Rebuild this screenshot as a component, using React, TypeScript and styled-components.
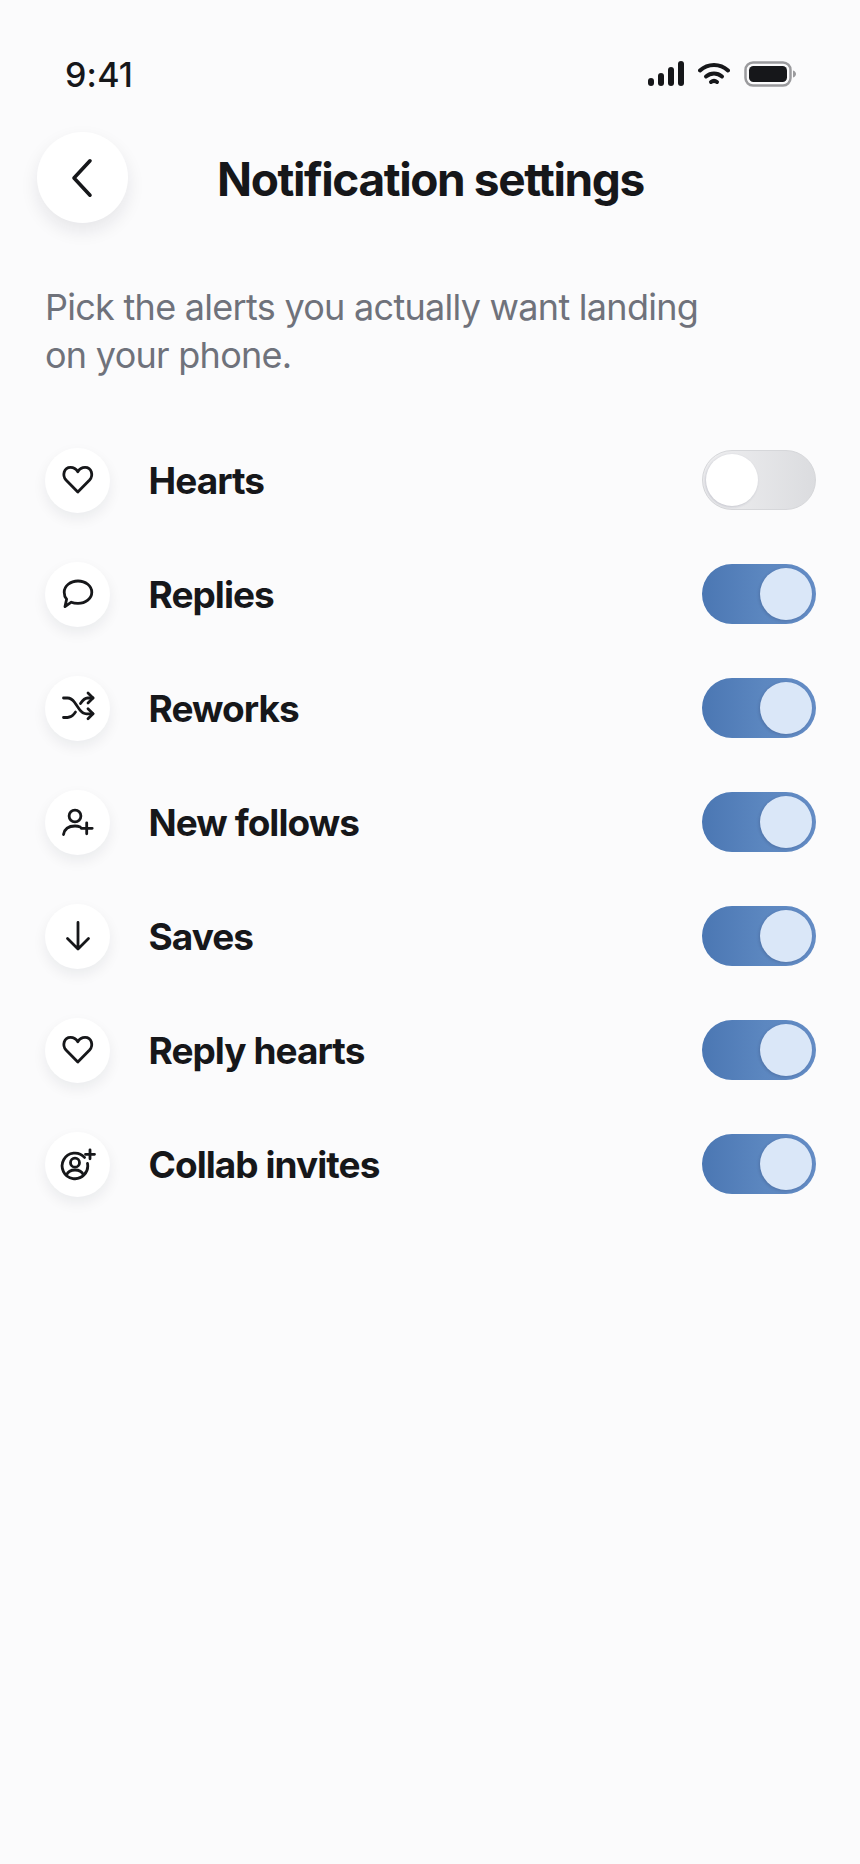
import React from 'react';
import styled, { createGlobalStyle } from 'styled-components';

const Global = createGlobalStyle`
  html, body { margin: 0; background: #fbfbfc; }
  body { font-family: Inter, "Liberation Sans", sans-serif; color: #16171a; }
`;

const Screen = styled.div`
  width: 860px;
  height: 1864px;
  overflow: hidden;
  background: #fbfbfc;
`;

const StatusBar = styled.div`
  display: flex;
  align-items: center;
  justify-content: space-between;
  height: 36px;
  padding: 56px 64px 0 65px;
`;

const Time = styled.span`
  font-size: 34px;
  font-weight: 550;
  letter-spacing: 0.2px;
`;

const StatusIcons = styled.div`
  display: flex;
  align-items: center;
  gap: 14px;
`;

const Header = styled.header`
  display: flex;
  align-items: center;
  padding: 40px 0 0 37px;
`;

const BackButton = styled.button`
  display: flex;
  align-items: center;
  justify-content: center;
  width: 91px;
  height: 91px;
  padding: 0;
  border: 0;
  border-radius: 50%;
  background: #fff;
  color: #16171a;
  box-shadow: 0 8px 18px rgba(20, 24, 40, 0.09);
`;

const Title = styled.h1`
  margin: 2px 0 0 89px;
  font-size: 46px;
  font-weight: 700;
  letter-spacing: -1.4px;
`;

const Intro = styled.p`
  width: 680px;
  margin: 60px 0 0 45px;
  font-size: 36px;
  line-height: 48px;
  letter-spacing: -0.72px;
  color: #6f727b;
`;

const List = styled.div`
  display: flex;
  flex-direction: column;
  gap: 49px;
  margin-top: 69px;
  padding: 0 44px 0 45px;
`;

const Row = styled.div`
  display: flex;
  align-items: center;
  height: 65px;
`;

const IconCircle = styled.div`
  display: flex;
  align-items: center;
  justify-content: center;
  flex: none;
  width: 65px;
  height: 65px;
  border-radius: 50%;
  background: #fff;
  box-shadow: 0 6px 14px rgba(20, 24, 40, 0.07);
`;

const Label = styled.span`
  flex: 1;
  margin-left: 38.5px;
  font-size: 37px;
  font-weight: 700;
  letter-spacing: -0.95px;
`;

const Switch = styled.div<{ $on: boolean }>`
  display: flex;
  flex: none;
  justify-content: ${p => (p.$on ? 'flex-end' : 'flex-start')};
  align-items: center;
  box-sizing: border-box;
  width: 114px;
  height: 60px;
  margin-bottom: 2px;
  padding: ${p => (p.$on ? '0 4px' : '0 2.5px')};
  border-radius: 30px;
  border: ${p => (p.$on ? '0' : '1.5px solid #d6d7da')};
  background: ${p =>
    p.$on
      ? 'linear-gradient(90deg, #4b77b3 0%, #5c87c0 55%, #648cc5 100%)'
      : 'linear-gradient(90deg, #efeff1 0%, #dbdcdf 100%)'};
`;

const Knob = styled.div<{ $on: boolean }>`
  width: 52px;
  height: 52px;
  border-radius: 50%;
  background: ${p => (p.$on ? '#dae7f8' : '#fff')};
  box-shadow: -1px 1px 3px rgba(20, 30, 60, 0.18);
`;

const Chevron = () => (
  <svg width="26" height="40" viewBox="0 0 26 40" fill="none" stroke="currentColor" strokeWidth="3.6" strokeLinecap="round" strokeLinejoin="round">
    <path d="M20 2.800 4 20l16 17.200" />
  </svg>
);

const Signal = () => (
  <svg width="36" height="26" viewBox="0 0 36 26" fill="#16171a">
    <rect x="0" y="17" width="6" height="8" rx="3" />
    <rect x="10" y="12" width="6" height="13" rx="3" />
    <rect x="20" y="6" width="6" height="19" rx="3" />
    <rect x="30" y="0" width="6" height="25" rx="3" />
  </svg>
);

const Wifi = () => (
  <svg width="32" height="24" viewBox="0 0 32 24" fill="none" stroke="#16171a" strokeWidth="4" strokeLinecap="round">
    <path d="M2 8.500C10 1 22 1 30 8.500" />
    <path d="M8 14.500c4.800-4 11.200-4 16 0" />
    <path d="M13 20c1.800-1.400 4.200-1.400 6 0" />
  </svg>
);

const Battery = () => (
  <svg width="52" height="26" viewBox="0 0 52 26">
    <rect x="1.500" y="1.500" width="45" height="23" rx="7.500" fill="none" stroke="#9a9a9d" strokeWidth="2.500" />
    <rect x="5" y="5" width="38" height="16" rx="4.500" fill="#16171a" />
    <path d="M49 9.500c2 .6 3 2 3 3.500s-1 2.900-3 3.500z" fill="#9a9a9d" />
  </svg>
);

const Glyph = ({ children }: { children: React.ReactNode }) => (
  <svg width="36" height="36" viewBox="0 0 36 36" fill="none" stroke="#16171a" strokeWidth="2.800" strokeLinecap="round" strokeLinejoin="round">
    {children}
  </svg>
);

const HeartIcon = () => (
  <Glyph>
    <path d="M17.800 29 6 17C2 12.600 3.800 4.300 10.500 4.300c3.300 0 5.700 1.700 7.300 4.400 1.600-2.700 4-4.400 7.300-4.400 6.700 0 8.500 8.300 4.500 12.700z" />
  </Glyph>
);

const ReplyIcon = () => (
  <Glyph>
    <path d="M18 4c7.700 0 13.800 5 13.800 11.200S25.700 26.400 18 26.400c-2.500 0-4.800-.4-6.700-1.200L5 29.600l1.600-7.400C5 20.300 4.200 17.900 4.200 15.200 4.200 9 10.300 4 18 4z" />
  </Glyph>
);

const ReworkIcon = () => (
  <Glyph>
    <path d="M3.500 7h4c3 0 5 1.500 7 4.300l5 7.200c2 2.800 4 4.300 7 4.300H33" />
    <path d="M3.500 26.500h4c2.800 0 4.800-1.300 6.500-3.500l1.500-2" />
    <path d="M20.500 12.500c2-3 4-5.500 7-5.500H33" />
    <path d="m28 2 5 5-5 5" />
    <path d="m28 17.800 5 5-5 5" />
  </Glyph>
);

const FollowIcon = () => (
  <Glyph>
    <circle cx="15" cy="11" r="5.900" />
    <path d="M3.500 29.500C4.500 24 9 21 15 21c2 0 3.800.4 5.300 1" />
    <path d="M26.700 17.800v11M21.200 23.300h11" />
  </Glyph>
);

const SaveIcon = () => (
  <Glyph>
    <path d="M18 3.500v26M7.500 19.500 18 30l10.500-10.500" />
  </Glyph>
);

const CollabIcon = () => (
  <Glyph>
    <path d="M24.500 10.400A12.800 12.800 0 1 0 27.500 16.500" />
    <circle cx="15" cy="15.700" r="4.500" />
    <path d="M6.500 28c1.500-3.400 4.800-5 8.500-5s7 1.600 8.500 5" />
    <path d="M30 2.800v9M25.500 7.300h9" />
  </Glyph>
);

type Alert = { label: string; icon: React.ReactNode; on: boolean };

const alerts: Alert[] = [
  { label: 'Hearts', icon: <HeartIcon />, on: false },
  { label: 'Replies', icon: <ReplyIcon />, on: true },
  { label: 'Reworks', icon: <ReworkIcon />, on: true },
  { label: 'New follows', icon: <FollowIcon />, on: true },
  { label: 'Saves', icon: <SaveIcon />, on: true },
  { label: 'Reply hearts', icon: <HeartIcon />, on: true },
  { label: 'Collab invites', icon: <CollabIcon />, on: true },
];

export default function App() {
  return (
    <Screen>
      <Global />
      <StatusBar>
        <Time>9:41</Time>
        <StatusIcons>
          <Signal />
          <Wifi />
          <Battery />
        </StatusIcons>
      </StatusBar>
      <Header>
        <BackButton aria-label="Back">
          <Chevron />
        </BackButton>
        <Title>Notification settings</Title>
      </Header>
      <Intro>Pick the alerts you actually want landing on your phone.</Intro>
      <List>
        {alerts.map(a => (
          <Row key={a.label}>
            <IconCircle>{a.icon}</IconCircle>
            <Label>{a.label}</Label>
            <Switch $on={a.on}>
              <Knob $on={a.on} />
            </Switch>
          </Row>
        ))}
      </List>
    </Screen>
  );
}
